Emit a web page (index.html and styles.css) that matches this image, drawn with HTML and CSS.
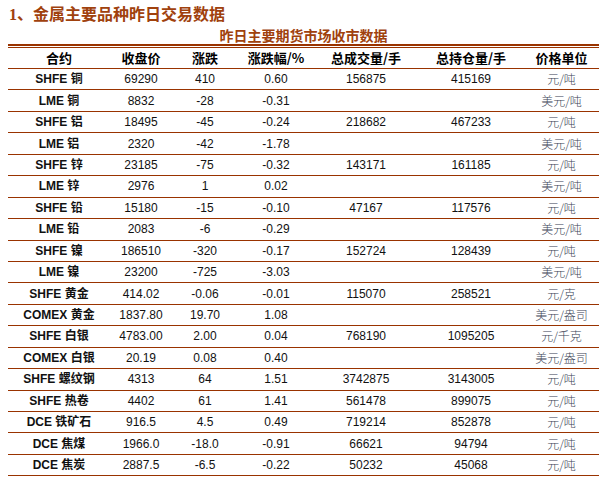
FILE: index.html
```html
<!DOCTYPE html>
<html lang="zh">
<head>
<meta charset="utf-8">
<link rel="stylesheet" href="styles.css">
</head>
<body>
<div class="page">
  <h1 class="title"><span class="num">1、</span>金属主要品种昨日交易数据</h1>
  <h2 class="subtitle">昨日主要期货市场收市数据</h2>
  <div class="rule"></div>
  <table class="data">
    <colgroup>
      <col class="c1"><col class="c2"><col class="c3"><col class="c4"><col class="c5"><col class="c6"><col class="c7">
    </colgroup>
    <thead>
      <tr><th>合约</th><th>收盘价</th><th>涨跌</th><th>涨跌幅/%</th><th>总成交量/手</th><th>总持仓量/手</th><th>价格单位</th></tr>
    </thead>
    <tbody>
      <tr><td class="name">SHFE 铜</td><td>69290</td><td>410</td><td>0.60</td><td>156875</td><td>415169</td><td class="unit">元/吨</td></tr>
      <tr><td class="name">LME 铜</td><td>8832</td><td>-28</td><td>-0.31</td><td></td><td></td><td class="unit">美元/吨</td></tr>
      <tr><td class="name">SHFE 铝</td><td>18495</td><td>-45</td><td>-0.24</td><td>218682</td><td>467233</td><td class="unit">元/吨</td></tr>
      <tr><td class="name">LME 铝</td><td>2320</td><td>-42</td><td>-1.78</td><td></td><td></td><td class="unit">美元/吨</td></tr>
      <tr><td class="name">SHFE 锌</td><td>23185</td><td>-75</td><td>-0.32</td><td>143171</td><td>161185</td><td class="unit">元/吨</td></tr>
      <tr><td class="name">LME 锌</td><td>2976</td><td>1</td><td>0.02</td><td></td><td></td><td class="unit">美元/吨</td></tr>
      <tr><td class="name">SHFE 铅</td><td>15180</td><td>-15</td><td>-0.10</td><td>47167</td><td>117576</td><td class="unit">元/吨</td></tr>
      <tr><td class="name">LME 铅</td><td>2083</td><td>-6</td><td>-0.29</td><td></td><td></td><td class="unit">美元/吨</td></tr>
      <tr><td class="name">SHFE 镍</td><td>186510</td><td>-320</td><td>-0.17</td><td>152724</td><td>128439</td><td class="unit">元/吨</td></tr>
      <tr><td class="name">LME 镍</td><td>23200</td><td>-725</td><td>-3.03</td><td></td><td></td><td class="unit">美元/吨</td></tr>
      <tr><td class="name">SHFE 黄金</td><td>414.02</td><td>-0.06</td><td>-0.01</td><td>115070</td><td>258521</td><td class="unit">元/克</td></tr>
      <tr><td class="name">COMEX 黄金</td><td>1837.80</td><td>19.70</td><td>1.08</td><td></td><td></td><td class="unit">美元/盎司</td></tr>
      <tr><td class="name">SHFE 白银</td><td>4783.00</td><td>2.00</td><td>0.04</td><td>768190</td><td>1095205</td><td class="unit">元/千克</td></tr>
      <tr><td class="name">COMEX 白银</td><td>20.19</td><td>0.08</td><td>0.40</td><td></td><td></td><td class="unit">美元/盎司</td></tr>
      <tr><td class="name">SHFE 螺纹钢</td><td>4313</td><td>64</td><td>1.51</td><td>3742875</td><td>3143005</td><td class="unit">元/吨</td></tr>
      <tr><td class="name">SHFE 热卷</td><td>4402</td><td>61</td><td>1.41</td><td>561478</td><td>899075</td><td class="unit">元/吨</td></tr>
      <tr><td class="name">DCE 铁矿石</td><td>916.5</td><td>4.5</td><td>0.49</td><td>719214</td><td>852878</td><td class="unit">元/吨</td></tr>
      <tr><td class="name">DCE 焦煤</td><td>1966.0</td><td>-18.0</td><td>-0.91</td><td>66621</td><td>94794</td><td class="unit">元/吨</td></tr>
      <tr><td class="name">DCE 焦炭</td><td>2887.5</td><td>-6.5</td><td>-0.22</td><td>50232</td><td>45068</td><td class="unit">元/吨</td></tr>
    </tbody>
  </table>
</div>
</body>
</html>
```

FILE: styles.css
```css
html, body {
  margin: 0;
  padding: 0;
  background: #ffffff;
}
.page {
  padding: 5px 15px 0 8px;
  font-family: "Liberation Sans", "Noto Sans CJK SC", sans-serif;
  color: #000;
}
.title {
  margin: 0;
  height: 20px;
  line-height: 20px;
  font-size: 16px;
  font-weight: bold;
  color: #a0410d;
  font-family: "Liberation Serif", "Noto Sans CJK SC", serif;
}
.title .num {
  margin-left: 1px;
}
.subtitle {
  margin: 0;
  height: 19px;
  line-height: 21px;
  font-size: 14px;
  font-weight: bold;
  color: #a0410d;
  text-align: center;
  padding-left: 0;
  font-family: "Noto Sans CJK SC", sans-serif;
}
.rule {
  width: 591px;
  height: 1px;
  border-top: 2px solid #993300;
}
.data {
  width: 591px;
  border-collapse: collapse;
  table-layout: fixed;
}
.c1 { width: 102px; }
.c2 { width: 62px; }
.c3 { width: 66px; }
.c4 { width: 76px; }
.c5 { width: 104px; }
.c6 { width: 106px; }
.c7 { width: 75px; }
.data thead th {
  border-top: 1px solid #993300;
  border-bottom: 1.5px solid #993300;
  padding: 0;
  height: 20px;
  font-size: 13px;
  font-weight: bold;
  font-family: "Noto Sans CJK SC", sans-serif;
  text-align: center;
  vertical-align: middle;
  line-height: 20px;
}
.data td {
  padding: 0;
  height: 20.45px;
  border-bottom: 1px solid #993300;
  text-align: center;
  vertical-align: middle;
  font-size: 12px;
  line-height: 14px;
  color: #111;
}
.data td.name {
  font-weight: bold;
  font-family: "Liberation Sans", "Noto Sans CJK SC", sans-serif;
}
.data td.unit {
  font-family: "Noto Sans CJK SC", sans-serif;
  font-weight: 300;
  font-size: 12px;
  color: #3a3f55;
}
```
